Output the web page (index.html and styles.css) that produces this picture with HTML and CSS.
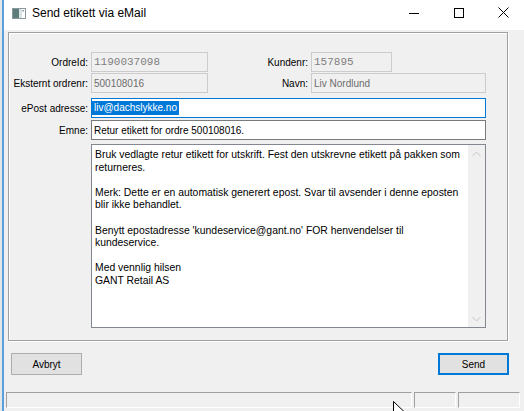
FILE: index.html
```html
<!DOCTYPE html>
<html>
<head>
<meta charset="utf-8">
<link rel="stylesheet" href="styles.css">
</head>
<body>
<div class="screen">
  <div class="edge"></div>
  <div class="edge-line"></div>
  <div class="window">
    <div class="titlebar">
      <svg class="app-icon" width="14" height="11" viewBox="0 0 14 11">
        <rect x="0.5" y="0.5" width="13" height="10" fill="#ffffff" stroke="#8a979e"/>
        <rect x="1" y="1" width="6" height="9" fill="#5f7d78"/>
        <rect x="7" y="1" width="3" height="9" fill="#d9e2e4"/>
        <rect x="10.5" y="2" width="1.5" height="1.5" fill="#7f8c90"/>
      </svg>
      <div class="title">Send etikett via eMail</div>
      <div class="controls">
        <div class="ctl"><svg width="10" height="10" viewBox="0 0 10 10"><path d="M0 5.5H10" stroke="#000" stroke-width="1"/></svg></div>
        <div class="ctl"><svg width="10" height="10" viewBox="0 0 10 10"><rect x="0.5" y="0.5" width="9" height="9" fill="none" stroke="#000" stroke-width="1"/></svg></div>
        <div class="ctl"><svg width="11" height="11" viewBox="0 0 11 11"><path d="M0.5 0.5L10.5 10.5M10.5 0.5L0.5 10.5" stroke="#000" stroke-width="1"/></svg></div>
      </div>
    </div>
    <div class="client">
      <div class="panel">
        <div class="row r1">
          <div class="lbl">OrdreId:</div>
          <div class="tb ro mono w117">1190037098</div>
          <div class="lbl lbl2">Kundenr:</div>
          <div class="tb ro mono w81">157895</div>
        </div>
        <div class="row r2">
          <div class="lbl">Eksternt ordrenr:</div>
          <div class="tb ro w117">500108016</div>
          <div class="lbl lbl2">Navn:</div>
          <div class="tb ro w175">Liv Nordlund</div>
        </div>
        <div class="row r3">
          <div class="lbl">ePost adresse:</div>
          <div class="tb focus wfull"><span class="sel">liv@dachslykke.no</span></div>
        </div>
        <div class="row r4">
          <div class="lbl">Emne:</div>
          <div class="tb edit wfull">Retur etikett for ordre 500108016.</div>
        </div>
        <div class="memo">
          <div class="memo-text">Bruk vedlagte retur etikett for utskrift. Fest den utskrevne etikett på pakken som<br>returneres.<br><br>Merk: Dette er en automatisk generert epost. Svar til avsender i denne eposten<br>blir ikke behandlet.<br><br>Benytt epostadresse 'kundeservice@gant.no' FOR henvendelser til<br>kundeservice.<br><br>Med vennlig hilsen<br>GANT Retail AS</div>
          <div class="vscroll">
            <div class="arrow"><svg width="9" height="6" viewBox="0 0 9 6"><path d="M0.5 5L4.5 1L8.5 5" fill="none" stroke="#c4c4c4" stroke-width="1"/></svg></div>
            <div class="arrow"><svg width="9" height="6" viewBox="0 0 9 6"><path d="M0.5 1L4.5 5L8.5 1" fill="none" stroke="#c4c4c4" stroke-width="1"/></svg></div>
          </div>
        </div>
      </div>
      <div class="buttons">
        <div class="btn">Avbryt</div>
        <div class="btn default">Send</div>
      </div>
      <div class="statusbar">
        <div class="sp sp1"></div>
        <div class="sp sp2"></div>
        <div class="sp sp3"></div>
      </div>
    </div>
  </div>
</div>
<svg class="cursor" width="13" height="20" viewBox="0 0 13 20">
  <path d="M0.5 0.5L0.5 16.5L4.5 12.5L7 18.5L9.5 17.5L7 11.5L12 11.5Z" fill="#fff" stroke="#000" stroke-width="1" stroke-linejoin="miter"/>
</svg>
</body>
</html>
```
FILE: styles.css
```css
body {
  margin: 0;
  width: 524px;
  height: 411px;
  overflow: hidden;
  background: #f0f0f0;
  font-family: "Liberation Sans", Arial, sans-serif;
  font-size: 10px;
  color: #000;
  position: relative;
}
.screen {
  display: flex;
  height: 411px;
}
.edge {
  width: 2px;
  flex: none;
  background: #e4e6e8;
}
.edge-line {
  width: 2px;
  flex: none;
  background: #5b9fdd;
}
.window {
  width: 522px;
  flex: none;
  display: flex;
  flex-direction: column;
}
.titlebar {
  height: 30px;
  background: #fff;
  display: flex;
  align-items: flex-start;
  flex: none;
}
.app-icon {
  margin: 8px 0 0 8px;
  flex: none;
}
.title {
  margin: 5px 0 0 6px;
  font-size: 12px;
  line-height: 16px;
  color: #000;
}
.controls {
  margin-left: auto;
  display: flex;
}
.ctl {
  width: 45px;
  height: 25px;
  display: flex;
  align-items: center;
  justify-content: center;
}
.client {
  flex: 1;
}
.panel {
  margin: 2px 0 0 4px;
  width: 500px;
  height: 309px;
  box-sizing: border-box;
  border: 1px solid #a0a0a0;
  box-shadow: inset 1px 1px #fff, 1px 1px #fff;
  padding-top: 19px;
}
.row {
  display: flex;
  align-items: center;
  height: 20px;
}
.r2 { margin-top: 1px; }
.r3 { margin-top: 5px; }
.r4 { margin-top: 2px; }
.lbl {
  width: 79px;
  flex: none;
  text-align: right;
  white-space: nowrap;
  margin-right: 3px;
}
.lbl2 {
  width: 100px;
}
.tb {
  box-sizing: border-box;
  height: 20px;
  flex: none;
  display: flex;
  align-items: center;
  white-space: nowrap;
  overflow: hidden;
  padding: 0 2px;
}
.ro {
  border: 1px solid #cccccc;
  background: #f0f0f0;
  color: #6d6d6d;
}
.mono {
  font-family: "Liberation Mono", "Courier New", monospace;
  font-size: 11px;
  color: #808080;
}
.focus {
  border: 1px solid #0078d7;
  background: #fff;
  padding: 0;
}
.edit {
  border: 1px solid #7a7a7a;
  background: #fff;
}
.w117 { width: 117px; }
.w81 { width: 81px; }
.w175 { width: 175px; }
.wfull { width: 395px; }
.sel {
  background: #0078d7;
  color: #fff;
  line-height: 14px;
  padding: 0 2px;
}
.memo {
  margin: 4px 0 0 82px;
  width: 395px;
  height: 184px;
  box-sizing: border-box;
  border: 1px solid #828790;
  background: #fff;
  display: flex;
}
.memo-text {
  flex: 1;
  padding: 4px 3px 2px;
  font-size: 10.4px;
  line-height: 12.6px;
  white-space: nowrap;
  overflow: hidden;
}
.vscroll {
  width: 17px;
  flex: none;
  background: #f0f0f0;
  display: flex;
  flex-direction: column;
  justify-content: space-between;
}
.arrow {
  height: 17px;
  display: flex;
  align-items: center;
  justify-content: center;
}
.buttons {
  display: flex;
  justify-content: space-between;
  margin: 12px 0 0 7px;
  width: 498px;
}
.btn {
  width: 71px;
  height: 22px;
  box-sizing: border-box;
  border: 1px solid #adadad;
  background: #e1e1e1;
  display: flex;
  align-items: center;
  justify-content: center;
}
.btn.default {
  border: 2px solid #0078d7;
}
.statusbar {
  display: flex;
  gap: 2px;
  margin: 17px 0 0 2px;
  width: 514px;
  height: 16px;
}
.sp {
  box-sizing: border-box;
  border: 1px solid;
  border-color: #a0a0a0 #fff #fff #a0a0a0;
  height: 16px;
}
.sp1 { width: 406px; }
.sp2 { width: 42px; }
.sp3 { width: 62px; }
.cursor {
  position: absolute;
  left: 393px;
  top: 401px;
}
```
